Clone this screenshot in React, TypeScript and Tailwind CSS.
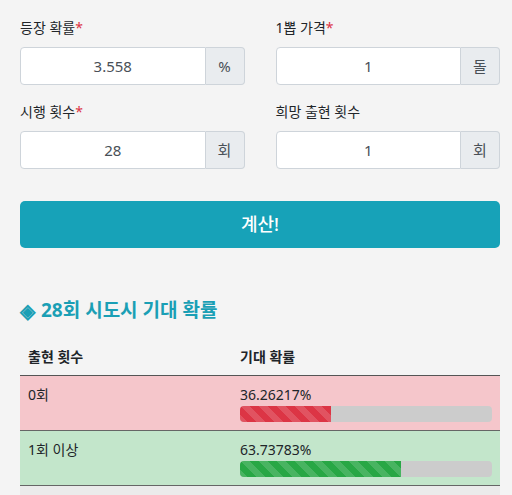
import React from 'react'

type Field = {
  label: string
  required: boolean
  value: string
  unit: string
}

const FIELDS: Field[] = [
  { label: '등장 확률', required: true, value: '3.558', unit: '%' },
  { label: '1뽑 가격', required: true, value: '1', unit: '돌' },
  { label: '시행 횟수', required: true, value: '28', unit: '회' },
  { label: '희망 출현 횟수', required: false, value: '1', unit: '회' },
]

const ROWS = [
  { label: '0회', pct: 36.26217, row: 'bg-[#f5c6cb]', bar: 'bg-[#dc3545]' },
  { label: '1회 이상', pct: 63.73783, row: 'bg-[#c3e6cb]', bar: 'bg-[#28a745]' },
]

function InputField({ field }: { field: Field }) {
  return (
    <div>
      <label className="mb-[9px] block text-[14px] leading-[21px] text-[#212529]">
        {field.label}
        {field.required && <span className="text-[#dc3545]">*</span>}
      </label>
      <div className="flex h-[38px]">
        <input
          readOnly
          value={field.value}
          className="min-w-0 flex-1 rounded-l-[4px] border border-[#ced4da] bg-white px-3 text-center text-[15px] text-[#495057] outline-none"
        />
        <span className="flex w-[39px] items-center justify-center rounded-r-[4px] border border-l-0 border-[#ced4da] bg-[#e9ecef] text-[15px] text-[#495057]">
          {field.unit}
        </span>
      </div>
    </div>
  )
}

export default function App() {
  return (
    <div className="h-[495px] overflow-hidden bg-[#f4f4f4] pt-[17px] pr-3 pl-5 font-['Noto_Sans','Noto_Sans_CJK_KR',sans-serif] text-[#212529]">
      <div className="grid grid-cols-2 gap-x-[31px] gap-y-4">
        {FIELDS.map((f) => (
          <InputField key={f.label} field={f} />
        ))}
      </div>

      <button className="mt-8 h-[47px] w-full rounded-[5px] bg-[#17a2b8] text-[18px] font-medium text-white">
        계산!
      </button>

      <h3 className="mt-[49px] flex items-center gap-[6px] text-[19px] font-bold leading-[27px] text-[#1a9fb5]">
        <span className="text-[20px]">◈</span>
        <span>28회 시도시 기대 확률</span>
      </h3>

      <table className="mt-[14px] w-full border-collapse text-[14px] leading-[21px]">
        <thead>
          <tr className="border-b border-[#555]">
            <th className="w-[212px] px-2 py-2 text-left font-bold">출현 횟수</th>
            <th className="px-2 py-2 text-left font-bold">기대 확률</th>
          </tr>
        </thead>
        <tbody>
          {ROWS.map((r) => (
            <tr key={r.label} className={`border-b border-[#666] ${r.row}`}>
              <td className="h-[55px] px-2 pt-2 pb-2 align-top">{r.label}</td>
              <td className="px-2 pt-2 pb-2 align-top">
                <div>{r.pct.toFixed(5)}%</div>
                <div className="mt-px h-4 w-full overflow-hidden rounded-[4px] bg-[#cccccc]">
                  <div
                    className={`h-full ${r.bar} bg-[linear-gradient(45deg,rgba(255,255,255,.15)_25%,transparent_25%,transparent_50%,rgba(255,255,255,.15)_50%,rgba(255,255,255,.15)_75%,transparent_75%,transparent)] bg-[length:18px_18px]`}
                    style={{ width: `${r.pct}%` }}
                  />
                </div>
              </td>
            </tr>
          ))}
          <tr className="bg-[#ebebeb]">
            <td className="h-[40px] px-2" />
            <td className="px-2" />
          </tr>
        </tbody>
      </table>
    </div>
  )
}
